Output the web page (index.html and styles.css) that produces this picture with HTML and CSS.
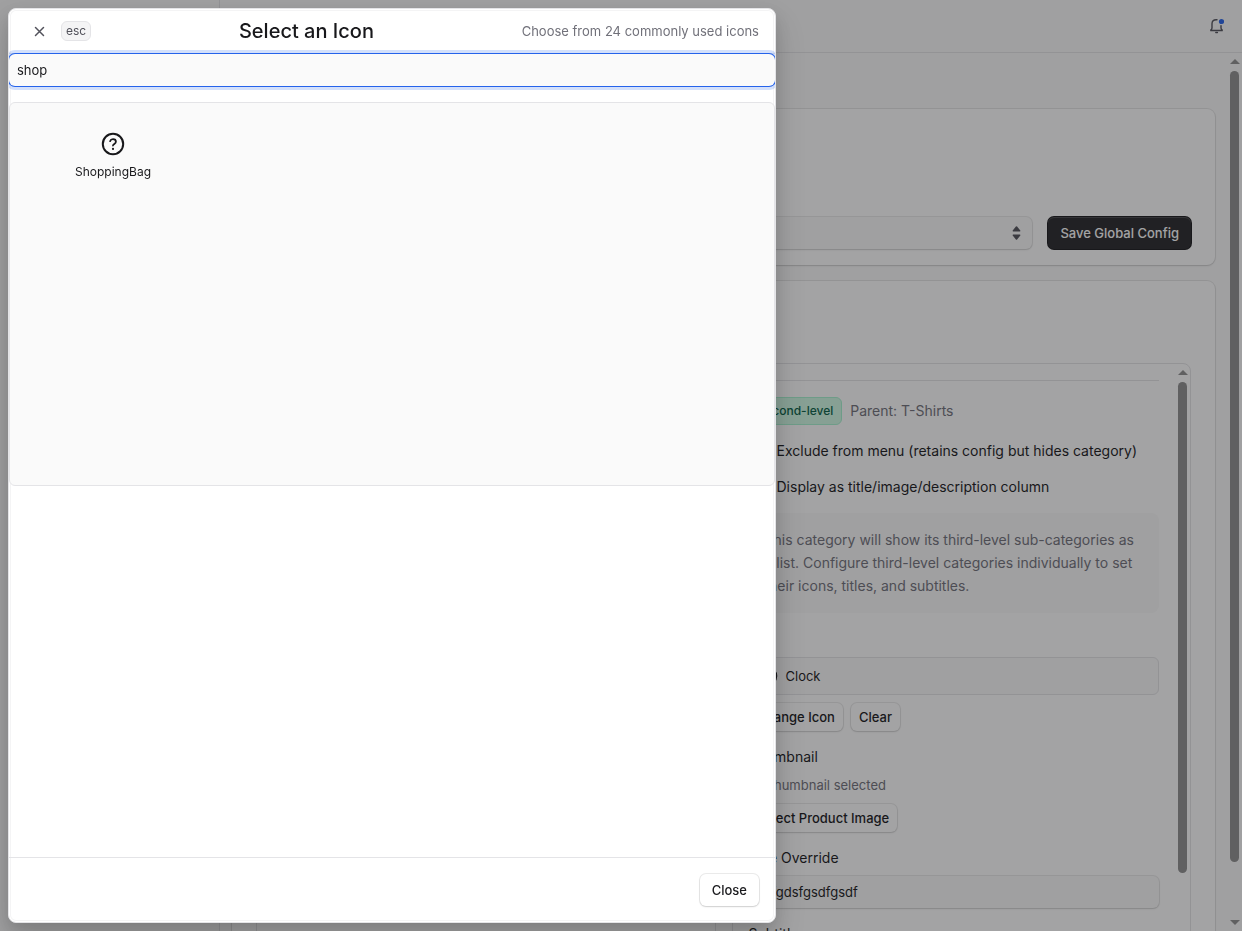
FILE: index.html
```html
<!DOCTYPE html>
<html lang="en">
<head>
<meta charset="utf-8">
<meta name="viewport" content="width=device-width, initial-scale=1">
<title>Select an Icon</title>
<link rel="stylesheet" href="styles.css">
</head>
<body>
<div class="app">
  <aside class="sidebar"></aside>
  <div class="shell">
    <header class="topbar">
      <button class="icon-button" type="button" aria-label="Notifications">
        <svg width="15" height="16" viewBox="0 0 15 16" fill="none" stroke="currentColor" stroke-width="1.400" stroke-linecap="round">
          <path d="M8 1.700H7.200C4.600 1.700 3 3.400 3 5.800v4.200c0 1.200-.6 2-1.700 2.500h12.400c-1.100-.5-1.700-1.300-1.700-2.500V7.600"/>
          <path d="M6.800 14.500h1.600"/>
          <circle class="bell-dot" cx="12.500" cy="3.500" r="2.600"/>
        </svg>
      </button>
    </header>
    <div class="body">
      <main class="content">
        <section class="card card-config">
          <select class="select" aria-label="Global config"><option></option></select>
          <svg class="select-arrows" width="9" height="14" viewBox="0 0 9 14" fill="currentColor"><path d="M1.2 5.400h6.600c.6 0 .8-.6.5-1L5.100.6a.8.8 0 0 0-1.200 0L.7 4.400c-.3.4-.1 1 .5 1zM1.200 8.600h6.600c.6 0 .8.6.5 1l-3.200 3.800a.8.8 0 0 1-1.200 0L.7 9.600c-.3-.4-.1-1 .5-1z"/></svg>
          <button class="button button-dark" type="button">Save Global Config</button>
        </section>
        <section class="card card-split">
          <div class="panel"></div>
          <div class="panel">
            <div class="panel-body">
              <div class="row row-meta">
                <span class="badge">Second-level</span>
                <span class="muted">Parent: T-Shirts</span>
              </div>
              <label class="row check"><input type="checkbox">Exclude from menu (retains config but hides category)</label>
              <label class="row check"><input type="checkbox">Display as title/image/description column</label>
              <p class="note">This category will show its third-level sub-categories as a list. Configure third-level categories individually to set their icons, titles, and subtitles.</p>
              <div class="field">
                <span class="label label-small">Icon</span>
                <div class="chosen">
                  <svg width="20" height="20" viewBox="0 0 20 20" fill="none" stroke="currentColor" stroke-width="1.600" stroke-linecap="round"><circle cx="10" cy="10" r="8.500"/><path d="M10 5v5l3 2"/></svg>
                  <span>Clock</span>
                </div>
                <div class="actions">
                  <button class="button button-small" type="button">Change Icon</button>
                  <button class="button button-small" type="button">Clear</button>
                </div>
              </div>
              <div class="field">
                <span class="label">Thumbnail</span>
                <span class="hint">No thumbnail selected</span>
                <div class="actions"><button class="button button-small" type="button">Select Product Image</button></div>
              </div>
              <div class="field">
                <label class="label" for="title">Title Override</label>
                <input class="input" id="title" type="text" value="sdfgdsfgsdfgsdf">
              </div>
              <div class="field">
                <label class="label" for="subtitle">Subtitle</label>
                <input class="input" id="subtitle" type="text">
              </div>
            </div>
            <div class="scrollbar scrollbar-panel"><i class="arrow-up"></i><i class="thumb"></i></div>
          </div>
        </section>
      </main>
      <div class="scrollbar"><i class="arrow-up"></i><i class="track"><i class="thumb"></i></i><i class="arrow-down"></i></div>
    </div>
  </div>
</div>

<div class="overlay">
  <div class="modal" role="dialog" aria-modal="true" aria-labelledby="modal-title">
    <header class="modal-header">
      <div class="dismiss">
        <button class="icon-button" type="button" aria-label="Close dialog">
          <svg width="15" height="15" viewBox="0 0 15 15" fill="none" stroke="currentColor" stroke-width="1.500" stroke-linecap="round"><path d="M3.500 3.500l8 8M11.500 3.500l-8 8"/></svg>
        </button>
        <kbd class="kbd">esc</kbd>
      </div>
      <h1 class="modal-title" id="modal-title">Select an Icon</h1>
      <p class="modal-hint">Choose from 24 commonly used icons</p>
    </header>
    <div class="modal-body">
      <input class="input search" type="text" value="shop" aria-label="Search icons">
      <div class="icon-grid">
        <button class="icon-item" type="button">
          <svg width="24" height="24" viewBox="0 0 24 24" fill="none" stroke="currentColor" stroke-width="2" stroke-linecap="round" stroke-linejoin="round">
            <circle cx="12" cy="12" r="10.200"/>
            <path stroke-width="1.800" d="M9.100 9.200c.4-1.300 1.500-2 2.900-2 1.700 0 2.900 1 2.900 2.500 0 2.200-2.700 2.100-2.900 3.800"/>
            <circle cx="12" cy="16.900" r="1.100" fill="currentColor" stroke="none"/>
          </svg>
          <span>ShoppingBag</span>
        </button>
      </div>
    </div>
    <footer class="modal-footer"><button class="button" type="button">Close</button></footer>
  </div>
</div>
</body>
</html>
```
FILE: styles.css
```css
* { box-sizing: border-box; }

body {
  margin: 0;
  font: 400 13px/20px Inter, "Liberation Sans", sans-serif;
  color: #18181b;
  background: #fafafa;
}

h1, p { margin: 0; font-weight: 400; }

button, input, select { font: inherit; color: inherit; border: 0; }

.app { display: flex; height: 100vh; overflow: hidden; }
.sidebar { flex: none; width: 220px; border-right: 1px solid #e4e4e7; }
.shell { flex: 1; min-width: 0; display: flex; flex-direction: column; }

.topbar {
  flex: none;
  display: flex;
  justify-content: flex-end;
  padding: 12px;
  border-bottom: 1px solid #e4e4e7;
}

.icon-button {
  display: flex;
  align-items: center;
  justify-content: center;
  width: 28px;
  height: 28px;
  padding: 0;
  border-radius: 6px;
  background: transparent;
  color: #52525b;
}

.bell-dot { fill: #2563eb; stroke: none; }

.body { flex: 1; min-height: 0; display: flex; }

.content {
  flex: 1;
  min-width: 0;
  display: flex;
  flex-direction: column;
  gap: 16px;
  padding: 56px 12px 0;
  overflow: hidden;
}

.card {
  flex: none;
  border-radius: 8px;
  background: #fff;
  box-shadow: 0 0 0 1px rgba(0, 0, 0, 0.08), 0 1px 2px rgba(0, 0, 0, 0.12);
}

.card-config {
  display: flex;
  align-items: flex-end;
  min-height: 156px;
  padding: 16px 24px;
}

.select {
  flex: 1;
  height: 32px;
  margin-right: 16px;
  border-radius: 6px;
  appearance: none;
  background: #fafafa;
  box-shadow: 0 0 0 1px rgba(0, 0, 0, 0.08), 0 1px 2px rgba(0, 0, 0, 0.12);
}

.select-arrows {
  align-self: flex-end;
  margin: 0 27px 9px -36px;
  color: #52525b;
  pointer-events: none;
}

.button {
  height: 32px;
  padding: 0 12px;
  border-radius: 6px;
  background: #fff;
  font-weight: 500;
  white-space: nowrap;
  box-shadow: 0 0 0 1px rgba(0, 0, 0, 0.08), 0 1px 2px rgba(0, 0, 0, 0.12);
}

.button-dark {
  background: #27272a;
  color: #fff;
  box-shadow: 0 0 0 1px #18181b, inset 0 1px 0 rgba(255, 255, 255, 0.16);
}

.button-small { height: 28px; padding: 0 8px; }

.card-split {
  display: grid;
  grid-template-columns: 1fr 1fr;
  gap: 16px;
  padding: 82px 24px 24px;
}

.panel {
  display: flex;
  min-width: 0;
  border: 1px solid #e4e4e7;
  border-radius: 8px;
}

.panel-body {
  flex: 1;
  min-width: 0;
  display: flex;
  flex-direction: column;
  gap: 16px;
  margin: 16px;
  padding-top: 16px;
  border-top: 1px solid #e4e4e7;
}

.row { display: flex; align-items: center; gap: 8px; font-size: 14px; }
.row-meta { height: 28px; }
.check input { width: 16px; height: 16px; margin: 0 4px 0 0; }

.badge {
  padding: 3px 8px;
  border: 1px solid #a7f3d0;
  border-radius: 6px;
  background: #d1fae5;
  color: #065f46;
  font-size: 12px;
  font-weight: 500;
}

.muted { color: #71717a; }

.note {
  padding: 15px 16px 16px;
  border-radius: 8px;
  background: #fafafa;
  color: #71717a;
  font-size: 14px;
  line-height: 23px;
}

.field { display: flex; flex-direction: column; gap: 8px; }
.label { font-size: 14px; }
.label-small { font-size: 13px; }
.hint { color: #71717a; line-height: 21px; }
.actions { display: flex; gap: 8px; }

.chosen {
  display: flex;
  align-items: center;
  gap: 8px;
  padding: 8px;
  border: 1px solid #e4e4e7;
  border-radius: 6px;
  background: #fafafa;
}

.input {
  width: 100%;
  height: 32px;
  padding: 0 8px;
  border-radius: 6px;
  outline: 0;
  background: #fafafa;
  box-shadow: 0 0 0 1px rgba(0, 0, 0, 0.08), 0 1px 2px rgba(0, 0, 0, 0.12);
}

.scrollbar {
  flex: none;
  display: flex;
  flex-direction: column;
  align-items: center;
  gap: 7px;
  width: 15px;
  padding: 6px 0;
}

.thumb { display: block; width: 9px; height: 94%; border-radius: 5px; background: #8f8f8f; }
.track { flex: 1; }
.scrollbar-panel .thumb { height: 491px; }
.arrow-up, .arrow-down { border: 5px solid transparent; }
.arrow-up { border-top: 0; border-bottom-color: #8f8f8f; }
.arrow-down { border-bottom: 0; border-top-color: #8f8f8f; }

.overlay { position: fixed; inset: 0; padding: 8px; background: rgba(24, 24, 27, 0.4); }

.modal {
  display: flex;
  flex-direction: column;
  max-width: 768px;
  height: 100%;
  border: 1px solid #e4e4e7;
  border-radius: 8px;
  overflow: hidden;
  background: #fff;
  box-shadow:
    inset 0 0 0 1px #fff,
    inset 0 0 0 2px #f4f4f5,
    0 8px 16px rgba(0, 0, 0, 0.12),
    0 16px 32px rgba(0, 0, 0, 0.14);
}

.modal-header {
  flex: none;
  display: flex;
  align-items: center;
  justify-content: space-between;
  padding: 8px 16px;
  border-bottom: 1px solid #e4e4e7;
}

.dismiss { display: flex; align-items: center; gap: 8px; }

.kbd {
  padding: 0 4px;
  border: 1px solid #e4e4e7;
  border-radius: 6px;
  background: #f4f4f5;
  color: #52525b;
  font: 400 12px/18px Inter, "Liberation Sans", sans-serif;
}

.modal-title { font-size: 20px; font-weight: 500; line-height: 28px; }
.modal-hint { color: #71717a; }

.modal-body { flex: 1; min-height: 0; display: flex; flex-direction: column; gap: 16px; }

.search {
  flex: none;
  box-shadow: 0 0 0 1px #2563eb, 0 0 0 4px rgba(37, 99, 235, 0.2);
}

.icon-grid {
  display: grid;
  grid-template-columns: repeat(4, 1fr);
  align-content: start;
  gap: 12px;
  height: 384px;
  padding: 16px;
  border: 1px solid #e4e4e7;
  border-radius: 6px;
  background: #fafafa;
}

.icon-item {
  display: flex;
  flex-direction: column;
  align-items: center;
  gap: 8px;
  padding: 13px;
  background: transparent;
  font-size: 12px;
  line-height: 16px;
}

.modal-footer {
  flex: none;
  display: flex;
  justify-content: flex-end;
  padding: 16px;
  border-top: 1px solid #e4e4e7;
}
```
